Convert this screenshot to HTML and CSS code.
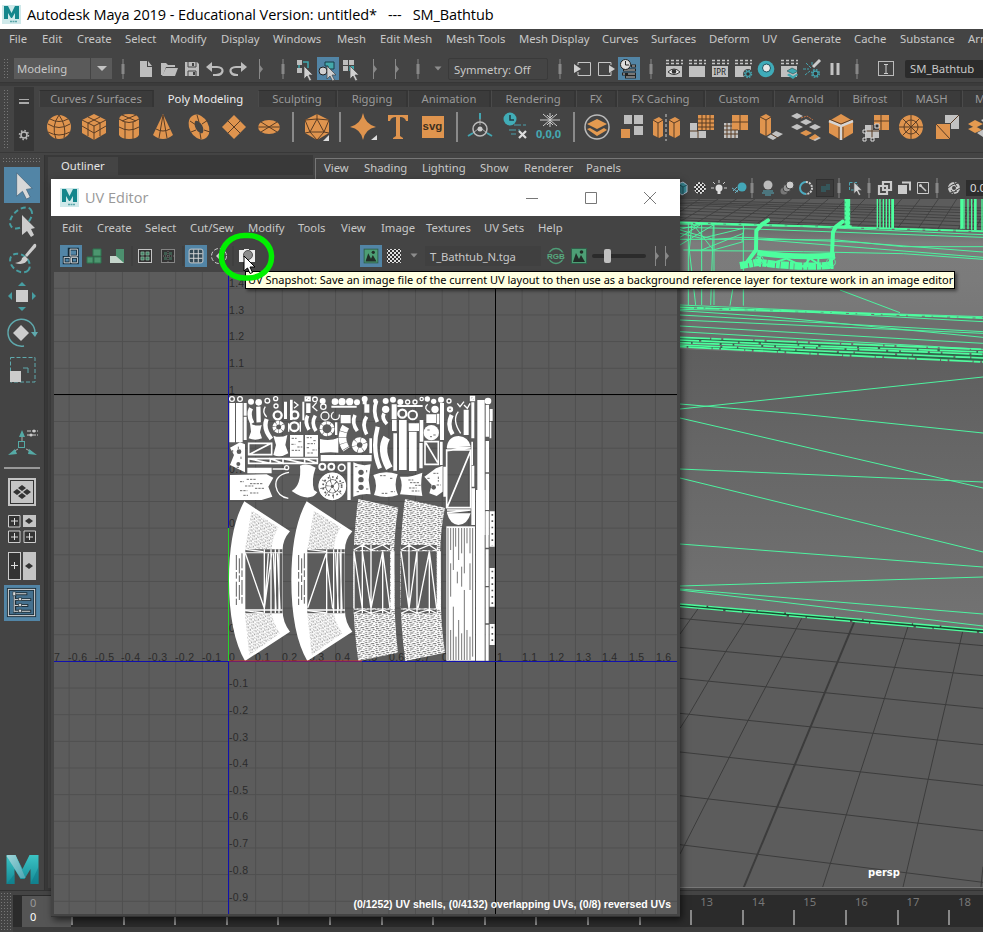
FILE: index.html
```html
<!DOCTYPE html>
<html lang="en">
<head>
<meta charset="utf-8">
<title>Autodesk Maya 2019</title>
<link rel="stylesheet" href="styles.css">
</head>
<body>
<svg class="defs" width="0" height="0">
<defs>
<linearGradient id="teal" x1="0" y1="0" x2="0" y2="1"><stop offset="0" stop-color="#3cc4c4"/><stop offset="1" stop-color="#138a96"/></linearGradient>
<linearGradient id="pale" x1="0" y1="0" x2="1" y2="1"><stop offset="0" stop-color="#9fd6da"/><stop offset="1" stop-color="#4fa7b3"/></linearGradient>
<symbol id="mlogo" viewBox="0 0 32 30"><path d="M0 0H9L16 14L23 0H32V29H24V14L18 24H14L8 14V29H0Z" fill="url(#teal)"/><path d="M0 1L1 0H9L19 23H14Z" fill="url(#pale)"/><path d="M0 29L8 19V29ZM24 29L32 12V29Z" fill="#0d7886" opacity=".5"/></symbol>
<symbol id="appicon" viewBox="0 0 19 19"><rect width="19" height="19" fill="#cfe9ea"/><path d="M2 1H6L9.500 8L13 1H17V14H13V8L10 13H9L6 8V14H2Z" fill="#14868c"/><path d="M8 16.500H15" stroke="#5aa5a9" stroke-width="1.500" stroke-dasharray="2 .5"/></symbol>
<symbol id="sep" viewBox="0 0 24 24"><path d="M12 2V22" stroke="#888"/><path d="M12 7V17" stroke="#888" stroke-width="3"/></symbol>
<symbol id="asep" viewBox="0 0 24 24"><path d="M11.500 2V22" stroke="#888"/><path d="M11 7L15 12L11 17Z" fill="#888"/></symbol>
<symbol id="drop" viewBox="0 0 24 24"><path d="M8.500 9.500H15.500L12 13.500Z" fill="#8d8d8d"/></symbol>
<symbol id="ptr" viewBox="0 0 24 24"><path d="M11 9V22L14 19L16.500 24L18.500 23L16 18H20Z" fill="#d0d0d0" stroke="#444" stroke-width=".7"/></symbol>
<symbol id="new" viewBox="0 0 24 24"><path d="M6 4H13V10H18V20H6Z" fill="#bdbdbd"/><path d="M14 4L18 9H14Z" fill="#bdbdbd"/></symbol>
<symbol id="open" viewBox="0 0 24 24"><path d="M4 18V6H9L11 8H18V10H9L6 18Z" fill="#bdbdbd"/><path d="M9 11H21L18 19H5Z" fill="#bdbdbd"/></symbol>
<symbol id="save" viewBox="0 0 24 24"><path d="M5 5H17L19 7V19H5Z" fill="#bdbdbd"/><path d="M8 5V10H16V5M8 19V14H16V19" fill="#bdbdbd" stroke="#444"/><path d="M13 6V9M14 15V18" stroke="#444" stroke-width="2"/></symbol>
<symbol id="undo" viewBox="0 0 24 24"><path d="M7 10H14C22 10 21 18 13 18H10" fill="none" stroke="#bdbdbd" stroke-width="2.200"/><path d="M9 5V15L3 10Z" fill="#bdbdbd"/></symbol>
<symbol id="redo" viewBox="0 0 24 24"><path d="M17 10H10C2 10 3 18 11 18H12" fill="none" stroke="#bdbdbd" stroke-width="2.200"/><path d="M15 5V15L21 10Z" fill="#bdbdbd"/></symbol>
<symbol id="hier" viewBox="0 0 24 24"><path d="M4 3H9V8H4ZM4 11H9V16H4ZM11 12H14V17H11Z" fill="#bdbdbd"/><path d="M10 5H15V11M6 8V11" fill="none" stroke="#3fa7ad" stroke-width="1.500"/><use href="#ptr"/></symbol>
<symbol id="obj" viewBox="0 0 24 24"><rect x="1" width="22" height="23" fill="#5285a6"/><circle cx="7" cy="14" r="4" fill="#d0d0d0" stroke="#222"/><path d="M9 5H18V12H12V9H9Z" fill="#44a9ab" stroke="#183d46"/><use href="#ptr"/></symbol>
<symbol id="comp" viewBox="0 0 24 24"><path d="M4 3H9V8H4ZM10 3H15V8H10ZM4 9H9V14H4Z" fill="#bdbdbd"/><path d="M10 9H15V14H10Z" fill="#3fa7ad"/><use href="#ptr"/></symbol>
<symbol id="inp" viewBox="0 0 24 24"><path d="M7 8V5.500H19.500V18.500H7V15" fill="none" stroke="#c5c5c5"/><path d="M3 7L10 12L3 16Z" fill="#d0d0d0"/></symbol>
<symbol id="outp" viewBox="0 0 24 24"><path d="M17 8V5.500H4.500V18.500H17V15" fill="none" stroke="#c5c5c5"/><path d="M15 8L21 12L15 16Z" fill="#d0d0d0"/></symbol>
<symbol id="hist" viewBox="0 0 24 24"><rect x="1" y="0" width="22" height="23" fill="#5285a6"/><path d="M6 13H19M5 17H19M8 20H19M14 9H19" stroke="#222" stroke-width="3"/><path d="M7 13H18M6 17H8M11 17H18M9 20H18M15 9H18" stroke="#ccc"/><circle cx="8.500" cy="7.500" r="5" fill="#ddd" stroke="#222"/><path d="M8.500 4V8H12" fill="none" stroke="#222"/></symbol>
<symbol id="clap" viewBox="0 0 24 24"><path d="M4 3.500H21M4 6.500H21" stroke="#c5c5c5" stroke-width="1.500" stroke-dasharray="3 2"/><path d="M4 9H20V20H4Z" fill="#c0c0c0"/></symbol>
<symbol id="ceye" viewBox="0 0 24 24"><use href="#clap"/><path d="M6 15Q12 9 18 15Q12 20 6 15Z" fill="#eee" stroke="#333"/><circle cx="12" cy="14.500" r="2.300" fill="#333"/></symbol>
<symbol id="cipr" viewBox="0 0 24 24"><use href="#clap"/><text x="5.500" y="18" class="tiny">IPR</text></symbol>
<symbol id="gear" viewBox="0 0 24 24"><circle cx="12" cy="12" r="6" fill="none" stroke="#45a3ae" stroke-width="2.500" stroke-dasharray="2.700 2"/><circle cx="12" cy="12" r="4" fill="#333" stroke="#45a3ae" stroke-width="2"/></symbol>
<symbol id="cgear" viewBox="0 0 24 24"><use href="#clap"/><circle cx="17" cy="17" r="5" fill="#444"/><use href="#gear" x="10" y="10" width="14" height="14"/></symbol>
<symbol id="ball" viewBox="0 0 24 24"><circle cx="12" cy="12" r="8.300" fill="#3fabb9"/><circle cx="12.500" cy="11" r="4" fill="#e6e6e6" stroke="#1c5260"/></symbol>
<symbol id="clay" viewBox="0 0 24 24"><use href="#clap"/><path d="M10 14L15 11L21 14L16 17Z" fill="#3fa7b0" stroke="#29484e" stroke-width=".6"/><path d="M10 18L12 16.500L16 19L20 16.500L21 18L16 22Z" fill="#3fa7b0"/></symbol>
<symbol id="light" viewBox="0 0 24 24"><path d="M13 10L20 3" stroke="#ccc" stroke-width="3"/><path d="M6 6L11 11M3 12H9M5 18L10 14M12 5V9" stroke="#45a3ae" stroke-dasharray="3 1"/><use href="#gear" x="8" y="9" width="15" height="15"/></symbol>
<symbol id="pause" viewBox="0 0 24 24"><path d="M9 6V18M15 6V18" stroke="#c3c3c3" stroke-width="3"/></symbol>
<symbol id="ibeam" viewBox="0 0 24 24"><rect x="4.500" y="4.500" width="15" height="14" fill="none" stroke="#bbb"/><path d="M10 7.500H14M12 8V16M10 16.500H14" stroke="#ccc"/></symbol>

<symbol id="sph" viewBox="0 0 30 30"><circle cx="15" cy="15" r="12" fill="#df944e"/><path d="M4 12Q15 19 26 12M4 20Q15 26 26 20M6 7Q15 12 24 7M15 3Q7 14 12 27M15 3Q23 14 20 26" class="ed"/></symbol>
<symbol id="cub" viewBox="0 0 30 30"><path d="M3 8L15 2L27 8V21L15 28L3 21Z" fill="#df944e"/><path d="M3 8L15 14L27 8M15 14V28M9 5L21 11V24M21 5L9 11V24M3 14L15 21L27 14" class="ed"/></symbol>
<symbol id="cyl" viewBox="0 0 30 30"><path d="M5 7Q6 2 15 2Q24 2 25 7V23Q23 27 15 27Q7 27 5 23Z" fill="#df944e"/><path d="M5 7Q15 14 25 7M5 15Q15 21 25 15M11 10V27M19 10V27M8 3L22 9M22 3L8 9" class="ed"/></symbol>
<symbol id="con" viewBox="0 0 30 30"><path d="M15 2L25 23Q15 31 5 23Z" fill="#df944e"/><path d="M8 17Q15 21 22 17M15 3L11 26M15 3L19 26" class="ed"/></symbol>
<symbol id="tor" viewBox="0 0 30 30"><ellipse cx="15" cy="15" rx="6.500" ry="10" fill="none" stroke="#df944e" stroke-width="6" transform="rotate(-28 15 15)"/><path d="M6 9L12 13M13 3L15 10M24 8L18 12M26 20L20 18M17 27L16 21M7 20L12 18" class="ed"/></symbol>
<symbol id="pln" viewBox="0 0 30 30"><path d="M15 3L27 15L15 27L3 15Z" fill="#df944e"/><path d="M9 9L21 21M21 9L9 21" class="ed"/></symbol>
<symbol id="dsc" viewBox="0 0 30 30"><ellipse cx="15" cy="15" rx="11" ry="7" fill="#df944e"/><path d="M4 15H26M7 10L23 20M23 10L7 20" class="ed"/></symbol>
<symbol id="bar" viewBox="0 0 30 30"><path d="M15 -2V32" stroke="#8a8a8a" stroke-width="2"/></symbol>
<symbol id="pla" viewBox="0 0 30 30"><path d="M15 2L27 8V21L15 28L3 21V8Z" fill="#df944e"/><path d="M3 8L15 7L27 8L22 20L27 21M22 20L15 28L8 20L3 21M8 20H22L15 7V2M15 7L8 20L3 8" class="ed"/><path d="M27 23V29H21Z" fill="#ddd"/></symbol>
<symbol id="str" viewBox="0 0 30 30"><path d="M15 1Q17 12 28 15Q17 17 15 28Q13 17 2 15Q13 12 15 1Z" fill="#df944e"/><path d="M29 23V28H23Z" fill="#ddd"/></symbol>
<symbol id="tee" viewBox="0 0 30 30"><path d="M5 3H25V9H23Q22 5 17 5V24L20 26V27H10V26L13 24V5Q8 5 7 9H5Z" fill="#df944e"/></symbol>
<symbol id="svgi" viewBox="0 0 30 30"><rect x="4" y="4" width="22" height="22" fill="#df944e"/><text x="4.500" y="18" class="svgt">svg</text></symbol>
<symbol id="jnt" viewBox="0 0 30 30"><path d="M15 1V7M3 24L8 21M27 24L22 21" stroke="#43a5b0" stroke-width="2"/><path d="M15 7V13M8 21L13 17M22 21L17 17" stroke="#aaa"/><circle cx="15" cy="17" r="7" fill="none" stroke="#bbb" stroke-width="1.500"/><circle cx="15" cy="17" r="2.500" fill="#ccc"/></symbol>
<symbol id="dhi" viewBox="0 0 30 30"><circle cx="10" cy="7" r="6.500" fill="#41adb7"/><path d="M10 3V8H14" fill="none" stroke="#213b43" stroke-width="1.500"/><path d="M14 13H26M9 18H20M11 22H16" stroke="#4aa0ac" stroke-dasharray="7 2"/><path d="M19 19L26 26M26 19L19 26" stroke="#ddd" stroke-width="2.200"/></symbol>
<symbol id="frz" viewBox="0 0 30 30"><path d="M15 1V15M5 8H25M8 2L22 14M22 2L8 14M12 3L15 6L18 3M12 13L15 10L18 13" stroke="#ccc" fill="none"/><text x="1" y="26" class="zer">0,0,0</text></symbol>
<symbol id="cmb" viewBox="0 0 30 30"><circle cx="15" cy="15" r="12" fill="none" stroke="#bbb" stroke-width="1.500"/><path d="M5 12L15 7L25 12L15 17ZM5 17L8 16L15 20L22 16L25 18L15 24Z" fill="#e49a50"/></symbol>
<symbol id="sepa" viewBox="0 0 30 30"><path d="M7 3H15V12H7ZM17 3H26V12H17ZM17 14H26V23H17Z" fill="#bdbdbd"/><path d="M4 17H13V26H4Z" fill="#df944e"/></symbol>
<symbol id="mir" viewBox="0 0 30 30"><path d="M2 8L8 5L12 8V24L8 26L2 23ZM18 8L24 5L29 8V23L24 26L18 23Z" fill="#df944e"/><path d="M2 8L7 11L12 8M7 11V26M18 8L23 11L29 8M23 11V26" class="ed"/><path d="M15 2V29" stroke="#ccc" stroke-dasharray="3 2"/></symbol>
<symbol id="smo" viewBox="0 0 30 30"><path d="M3 11H10V19H19V26H3Z" fill="#c2c2c2"/><path d="M11 3H27V18H11Z" fill="#df944e"/><path d="M15 3V18M19 3V18M23 3V18M11 7H27M11 11H27M11 15H27M11 19V26M3 19H11" class="ed"/></symbol>
<symbol id="smo2" viewBox="0 0 30 30"><path d="M3 11H17V26H3Z" fill="#c2c2c2"/><path d="M11 3H27V18H11Z" fill="#df944e"/><path d="M19 3V18M11 10H27M6 11V26M10 11V26M14 18V26M3 14H11M3 18H17M3 22H17" class="ed"/></symbol>
<symbol id="ext" viewBox="0 0 30 30"><path d="M4 5L10 2L15 5V21L10 24L4 21Z" fill="#df944e"/><path d="M4 5L10 8L15 5M10 8V24" class="ed"/><path d="M11 25L20 19L27 22L17 28Z" fill="#c2c2c2"/><path d="M15 22L22 26" class="ed"/></symbol>
<symbol id="bri" viewBox="0 0 30 30"><path d="M0 4L6 1L12 4L6 7ZM0 15L6 12L12 15L6 18ZM18 15L24 12L30 15L24 18ZM9 10L15 7L21 10L15 13ZM18 26L24 23L30 26L24 29Z" fill="#c2c2c2"/><path d="M9 21L15 18L21 21L15 24ZM18 26L24 22L28 25L22 28Z" fill="#df944e"/><path d="M10 6L16 4L22 8" fill="none" stroke="#cc7340" stroke-dasharray="2 1"/></symbol>
<symbol id="bev" viewBox="0 0 30 30"><path d="M3 9L15 2L27 9V21L15 28L3 21Z" fill="#df944e"/><path d="M3 9L15 14L27 9M15 14V28" stroke="#d5d5d5" stroke-width="2.500" fill="none"/><path d="M3 7L15 12L27 7M17 15V27M13 15V27" class="ed"/></symbol>
<symbol id="mrg" viewBox="0 0 30 30"><path d="M13 3H28V18H18V13H13Z" fill="#df944e"/><path d="M4 13H12V18H18V26H4Z" fill="#c2c2c2"/><path d="M20 3V18M13 9H28M4 19H18M11 13V26" class="ed"/><path d="M14 12H18V16H14ZM2 18H5V21H2ZM2 26H5V29H2ZM10 26H13V29H10Z" fill="#333" stroke="#ddd"/></symbol>
<symbol id="whl" viewBox="0 0 30 30"><circle cx="15" cy="15" r="12" fill="#df944e"/><path d="M15 3V27M3 15H27M6.500 6.500L23.500 23.500M23.500 6.500L6.500 23.500" class="ed"/><circle cx="15" cy="15" r="7" class="ed"/></symbol>
<symbol id="tri" viewBox="0 0 30 30"><path d="M13 3H27V17H19V11H13Z" fill="#c2c2c2"/><path d="M4 12H18V27H4Z" fill="#df944e"/><path d="M4 12L18 27M27 3L18 12" class="ed"/></symbol>
<symbol id="mul" viewBox="0 0 30 30"><path d="M2 12L9 8L17 12L9 16ZM2 17L9 14L16 18L9 21Z" fill="#e49a50"/><path d="M11 21L18 17L28 22L20 27ZM15 8L22 5L28 9L20 13Z" fill="#c2c2c2"/></symbol>

<symbol id="b3" viewBox="0 0 24 24"><path d="M4.500 13.500H11V19.500H4.500ZM12.500 13.500H19V19.500H12.500ZM10 4.500H19V12H10Z" fill="none" stroke="#132a38" stroke-width="3"/><path d="M4.500 13.500H11V19.500H4.500ZM12.500 13.500H19V19.500H12.500ZM11 4.500H19V12H11Z" fill="none" stroke="#ddd"/></symbol>
<symbol id="g3" viewBox="0 0 24 24"><path d="M5 13H11V19H5ZM12 13H19V19H12ZM11 5H19V12H11Z" fill="#4c966f" stroke="#2f7451"/></symbol>
<symbol id="g4" viewBox="0 0 24 24"><path d="M5 12H19V19H5ZM11 5H19V12H11Z" fill="#4c8f6e"/><path d="M5 12H11V19H5ZM11 12L19 19H11Z" fill="#c4d4ca"/></symbol>
<symbol id="gr1" viewBox="0 0 24 24"><rect x="5.500" y="5.500" width="13" height="13" fill="#333" stroke="#c5c5c5"/><path d="M8 8H11V11H8ZM13 8H16V11H13ZM8 13H11V16H8ZM13 13H16V16H13Z" fill="#3f8264" stroke="#86b39c" stroke-width=".8"/></symbol>
<symbol id="gr2" viewBox="0 0 24 24"><rect x="5.500" y="5.500" width="13" height="13" fill="#333" stroke="#858585"/><path d="M8 8H11V11H8ZM13 8H16V11H13ZM8 13H11V16H8ZM13 13H16V16H13Z" fill="#3f5c4f"/><path d="M12 7V18M7 12H18" stroke="#777" stroke-dasharray="1 1"/></symbol>
<symbol id="gr3" viewBox="0 0 24 24"><rect x="4.500" y="4.500" width="15" height="15" rx="2" fill="#344955" stroke="#d4d4d4"/><path d="M9.500 5V19M14.500 5V19M5 9.500H19M5 14.500H19" stroke="#ddd"/></symbol>
<symbol id="gr4" viewBox="0 0 24 24"><circle cx="12" cy="12" r="7.500" fill="none" stroke="#ccc" stroke-dasharray="4 2"/><path d="M12 9L15 12L12 15L9 12Z" fill="#ccc"/></symbol>
<symbol id="cam" viewBox="0 0 24 24"><path d="M4 6H9V5H14V6H20V18H4Z" fill="#eee"/><circle cx="13" cy="11" r="4.500" fill="#8c8c8c" stroke="#555"/></symbol>
<symbol id="vsep" viewBox="0 0 24 24"><path d="M12 2V22" stroke="#3a3a3a"/></symbol>
<symbol id="img" viewBox="0 0 24 24"><rect x="4.500" y="4.500" width="15" height="15" fill="#4d9f75" stroke="#30604a"/><path d="M6 18L9 9L12 15L14 11L18 18Z" fill="#222e28"/><circle cx="14.500" cy="8" r="1.800" fill="#222e28"/></symbol>
<pattern id="ck" width="4" height="4" patternUnits="userSpaceOnUse"><rect width="4" height="4" fill="#333"/><path d="M0 0H2V2H0ZM2 2H4V4H2Z" fill="#ddd"/></pattern>
<symbol id="chk" viewBox="0 0 24 24"><rect x="5" y="5" width="14" height="14" fill="url(#ck)"/></symbol>
<symbol id="rgb" viewBox="0 0 24 24"><circle cx="12" cy="12" r="7.500" fill="none" stroke="#4f9c77" stroke-width="1.500"/><rect x="2" y="8.500" width="20" height="7" fill="#444"/><text x="3" y="15" class="rgbt">RGB</text></symbol>

<symbol id="vball" viewBox="0 0 24 24"><circle cx="14" cy="11" r="4.500" fill="#43a7b8"/><path d="M4 12L10 16M5 15L9 11M7 17L11 13" stroke="#6db0c2"/></symbol>
<symbol id="vcube" viewBox="0 0 24 24"><path d="M7 8L12 6L16 9V16L11 19L7 16Z" fill="#3b8d9a" stroke="#abc"/><path d="M7 8L12 11L16 9M12 11V18" stroke="#1f5560" fill="none"/></symbol>
<symbol id="vchk" viewBox="0 0 24 24"><circle cx="12" cy="12" r="6" fill="url(#ck)"/></symbol>
<symbol id="bulb" viewBox="0 0 24 24"><circle cx="12" cy="12" r="3.500" fill="#ddd"/><path d="M12 15V18" stroke="#ddd" stroke-width="3"/><path d="M12 4V7M4 12H7M17 12H20M6 6L8 8M18 6L16 8" stroke="#ccc"/></symbol>
<symbol id="vao" viewBox="0 0 24 24"><circle cx="12" cy="9" r="4.500" fill="#bbb"/><path d="M7 15H17M6 17H18M9 19H15" stroke="#54a6b5" stroke-width="1.200"/></symbol>
<symbol id="vmb" viewBox="0 0 24 24"><circle cx="8" cy="15" r="3.500" fill="#777"/><circle cx="11" cy="12" r="4" fill="#999" stroke="#444"/><circle cx="14" cy="9" r="4" fill="#ccc" stroke="#444"/></symbol>
<symbol id="vaa" viewBox="0 0 24 24"><path d="M12 6A6 6 0 0 0 12 18" fill="none" stroke="#4dabc0" stroke-width="2"/><path d="M12 6A6 6 0 0 1 12 18" fill="none" stroke="#ccc" stroke-width="2" stroke-dasharray="2 1"/></symbol>
<symbol id="vdim" viewBox="0 0 24 24"><rect x="3.500" y="3.500" width="17" height="17" fill="#3b3b3b" stroke="#303030"/><path d="M8 10H13V16H8ZM13 8H17V14H13Z" fill="#35565a"/></symbol>
<symbol id="vsel" viewBox="0 0 24 24"><path d="M6.500 6.500H14V14H6.500Z" fill="none" stroke="#4ba4b2" stroke-dasharray="3 1.500"/><g transform="translate(1 -2) scale(.9)"><use href="#ptr"/></g></symbol>
<symbol id="vxr" viewBox="0 0 24 24"><path d="M6 10H14V18H6ZM10 6H18V14H10Z" fill="none" stroke="#ccc" stroke-width="2.200"/></symbol>
<symbol id="vxs" viewBox="0 0 24 24"><path d="M10 6.500H18V14.500" fill="none" stroke="#ccc" stroke-width="2"/><path d="M6 9H15V18H6Z" fill="#ccc"/></symbol>
<symbol id="vxa" viewBox="0 0 24 24"><path d="M6.500 6.500H17.500V17.500H6.500Z" fill="none" stroke="#ccc"/><path d="M9 9L15 15" stroke="#ccc" stroke-width="1.500"/><circle cx="9.500" cy="9.500" r="1.500" fill="#ccc"/></symbol>
<symbol id="ape" viewBox="0 0 24 24"><circle cx="12" cy="12" r="6" fill="#ccc"/><path d="M12 6L15 11M18 12L13 15M12 18L9 14M6 12L10 9M16 7L10 9M8 17L15 15" stroke="#444"/><circle cx="12" cy="12" r="2" fill="#444"/></symbol>

<symbol id="bigarrow" viewBox="0 0 37 37"><path d="M13 6V30L19 25L23 33L27 31L23 23L29 22Z" fill="#d8d8d8" stroke="#3c6079" stroke-width=".7"/></symbol>
<symbol id="lasso" viewBox="0 0 37 37"><ellipse cx="17" cy="14" rx="13" ry="8" transform="rotate(-42 17 14)" fill="none" stroke="#479ea2" stroke-width="2" stroke-dasharray="5 3"/><path d="M18 11V31L23 27L27 33L30 31L27 25L31 24Z" fill="#ccc"/></symbol>
<symbol id="psel" viewBox="0 0 37 37"><ellipse cx="16" cy="22" rx="11" ry="8" transform="rotate(40 16 22)" fill="none" stroke="#479ea2" stroke-width="2" stroke-dasharray="5 3"/><path d="M21 14L30 3Q33 2 32 6L23 16Z" fill="#ccc"/><path d="M21 15L24 18Q21 25 11 22Q18 21 18 17Z" fill="#ccc"/></symbol>
<symbol id="move" viewBox="0 0 37 37"><rect x="12" y="12" width="12" height="12" fill="#ccc"/><path d="M14 8L18 4L22 8ZM14 29H22L18 33ZM8 14V22L4 18ZM28 14V22L32 18Z" fill="#479ea2"/></symbol>
<symbol id="rot" viewBox="0 0 37 37"><path d="M17 10L25 18L17 26L9 18Z" fill="#ccc"/><path d="M31 18A13.500 13.500 0 1 0 20 31" fill="none" stroke="#5fa9ad" stroke-width="1.500"/><path d="M27 17H34L31 22Z" fill="#5fa9ad"/></symbol>
<symbol id="scl" viewBox="0 0 37 37"><path d="M6.500 5.500H31V30H6.500Z" fill="none" stroke="#5fa9ad" stroke-dasharray="4 2"/><path d="M19 16H24V21" fill="none" stroke="#5fa9ad"/><rect x="6" y="19" width="11" height="11" fill="#ccc"/></symbol>
<symbol id="axes" viewBox="0 0 37 37"><path d="M18 10V16M14 23L9 26M22 23L28 26" stroke="#aaa"/><rect x="14.500" y="15.500" width="6" height="6" fill="none" stroke="#55aaa6"/><path d="M18 4L21 11H15ZM11 23L13 28L4 29ZM25 23L33 29L24 28Z" fill="#55aaa6"/><path d="M23 5H34M23 9H34" stroke="#ccc" stroke-dasharray="4 1"/><circle cx="30" cy="5" r="1.500" fill="#ccc"/><circle cx="27" cy="9" r="1.500" fill="#ccc"/></symbol>
<symbol id="lay1" viewBox="0 0 37 37"><rect x="4" y="4" width="28" height="28" fill="#c4c4c4"/><rect x="6.500" y="6.500" width="23" height="23" fill="none" stroke="#333"/><path d="M14 14L18 11L22 14L18 17ZM9 18L13 15L17 18L13 21ZM19 18L23 15L27 18L23 21ZM14 22L18 19L22 22L18 25Z" fill="#333"/></symbol>
<symbol id="lay2" viewBox="0 0 37 37"><path d="M4.500 4.500H16V16H4.500ZM4.500 20H16V31.500H4.500ZM20 20H31.500V31.500H20Z" fill="#333" stroke="#ccc"/><rect x="19" y="4" width="13" height="12" fill="#c4c4c4"/><path d="M21 10L25 7L29 10L25 13Z" fill="#333"/><path d="M7 10H14M10.500 7V14M7 26H14M10.500 22V29M22 26H29M25.500 22V29" stroke="#ddd"/></symbol>
<symbol id="lay3" viewBox="0 0 37 37"><rect x="4.500" y="4.500" width="12" height="27" fill="#333" stroke="#ccc"/><rect x="19" y="4" width="13" height="28" fill="#c4c4c4"/><path d="M21 18L25 15L29 18L25 21Z" fill="#333"/><path d="M7 17.500H14M10.500 14V21" stroke="#ddd"/></symbol>
<symbol id="lay4" viewBox="0 0 37 37"><rect x="4.500" y="4.500" width="27" height="27" fill="#45708e" stroke="#1d2f3a" stroke-width="3"/><rect x="4.500" y="4.500" width="27" height="27" fill="none" stroke="#ddd"/><path d="M11 9V29M11 9H24M11 15H28M11 21H25M11 27H28" stroke="#1d2f3a" stroke-width="3"/><path d="M10.500 9V28M11 9H23M11 15H27M11 21H24M11 27H27" stroke="#ddd"/><path d="M9 7H12V11H9ZM15 13H18V16H15ZM15 19H18V22H15ZM15 25H18V28H15Z" fill="#ddd" stroke="#1d2f3a" stroke-width=".7"/></symbol>

<pattern id="grid" x="14.600" y="15.800" width="26.650" height="26.650" patternUnits="userSpaceOnUse"><path d="M0 .5H27M.5 0V27" stroke="#4f4f4f" stroke-width="1"/></pattern>
<pattern id="dith" width="31" height="24" patternUnits="userSpaceOnUse"><rect width="31" height="24" fill="#fff"/><path d="M1 2H8M12 2H15M19 5H29M3 8H12M16 9H19M24 11H30M1 14H5M9 14H18M21 17H25M2 20H7M12 21H22M27 23H30" stroke="#5c5c5c" stroke-width="2.600"/></pattern>
<pattern id="dots" width="17" height="19" patternUnits="userSpaceOnUse" patternTransform="rotate(-22)"><rect width="17" height="19" fill="#fff"/><path d="M2 1V6M7 4V6M12 2V8M5 10V13M9 12V18M15 12V15M1 16V18" stroke="#5c5c5c" stroke-width="2"/></pattern>
<linearGradient id="tub" x1="0" y1="0" x2="0" y2="1"><stop offset="0" stop-color="#626262"/><stop offset=".22" stop-color="#7c7c7c"/><stop offset=".6" stop-color="#7b7b7b"/><stop offset="1" stop-color="#777"/></linearGradient>
<linearGradient id="side" x1="0" y1="0" x2="0" y2="1"><stop offset="0" stop-color="#5e5e5e"/><stop offset=".35" stop-color="#666"/><stop offset="1" stop-color="#737373"/></linearGradient>
</defs>
</svg>

<header class="titlebar"><svg class="app"><use href="#appicon"/></svg><span>Autodesk Maya 2019 - Educational Version: untitled*&nbsp;&nbsp; ---&nbsp;&nbsp; SM_Bathtub</span></header>

<nav class="menubar"><span>File</span><span>Edit</span><span>Create</span><span>Select</span><span>Modify</span><span>Display</span><span>Windows</span><span>Mesh</span><span>Edit Mesh</span><span>Mesh Tools</span><span>Mesh Display</span><span>Curves</span><span>Surfaces</span><span>Deform</span><span>UV</span><span>Generate</span><span>Cache</span><span>Substance</span><span>Arnold</span></nav>

<div class="status">
<i class="grip"></i><div class="combo"><span>Modeling</span><b></b></div>
<svg><use href="#sep"/></svg><svg><use href="#new"/></svg><svg><use href="#open"/></svg><svg><use href="#save"/></svg><svg><use href="#undo"/></svg><svg><use href="#redo"/></svg><svg><use href="#asep"/></svg><svg><use href="#sep"/></svg><svg><use href="#hier"/></svg><svg><use href="#obj"/></svg><svg><use href="#comp"/></svg><svg><use href="#asep"/></svg><svg><use href="#asep"/></svg><svg><use href="#sep"/></svg><svg><use href="#drop"/></svg>
<div class="sym">Symmetry: Off</div>
<svg><use href="#sep"/></svg><svg><use href="#inp"/></svg><svg><use href="#outp"/></svg><svg><use href="#hist"/></svg><svg><use href="#sep"/></svg><svg><use href="#ceye"/></svg><svg><use href="#clap"/></svg><svg><use href="#cipr"/></svg><svg><use href="#cgear"/></svg><svg><use href="#ball"/></svg><svg><use href="#clay"/></svg><svg><use href="#light"/></svg><svg><use href="#pause"/></svg><svg><use href="#sep"/></svg><svg><use href="#ibeam"/></svg>
<div class="name">SM_Bathtub</div>
</div>

<section class="shelf">
<i class="grip"></i>
<div class="shelfctl"><b></b><svg viewBox="0 0 12 12"><circle cx="6" cy="6" r="3" fill="none" stroke="#bbb" stroke-width="1.500"/><circle cx="6" cy="6" r="4.500" fill="none" stroke="#bbb" stroke-width="1.500" stroke-dasharray="1.500 2"/></svg></div>
<div class="shelfmain">
<div class="tabs"><span>Curves / Surfaces</span><span class="on">Poly Modeling</span><span>Sculpting</span><span>Rigging</span><span>Animation</span><span>Rendering</span><span>FX</span><span>FX Caching</span><span>Custom</span><span>Arnold</span><span>Bifrost</span><span>MASH</span><span class="cut">Motion</span></div>
<div class="icons"><svg><use href="#sph"/></svg><svg><use href="#cub"/></svg><svg><use href="#cyl"/></svg><svg><use href="#con"/></svg><svg><use href="#tor"/></svg><svg><use href="#pln"/></svg><svg><use href="#dsc"/></svg><svg><use href="#bar"/></svg><svg><use href="#pla"/></svg><svg><use href="#bar"/></svg><svg><use href="#str"/></svg><svg><use href="#tee"/></svg><svg><use href="#svgi"/></svg><svg><use href="#bar"/></svg><svg><use href="#jnt"/></svg><svg><use href="#dhi"/></svg><svg><use href="#frz"/></svg><svg><use href="#bar"/></svg><svg><use href="#cmb"/></svg><svg><use href="#sepa"/></svg><svg><use href="#mir"/></svg><svg><use href="#smo"/></svg><svg><use href="#smo2"/></svg><svg><use href="#ext"/></svg><svg><use href="#bri"/></svg><svg><use href="#bev"/></svg><svg><use href="#mrg"/></svg><svg><use href="#whl"/></svg><svg><use href="#tri"/></svg><svg><use href="#mul"/></svg></div>
</div>
</section>

<main class="work">
<aside class="toolbox">
<i class="hgrip"></i>
<svg class="sel"><use href="#bigarrow"/></svg><svg><use href="#lasso"/></svg><svg><use href="#psel"/></svg><svg><use href="#move"/></svg><svg><use href="#rot"/></svg><svg><use href="#scl"/></svg><svg></svg><svg><use href="#axes"/></svg>
<hr>
<svg><use href="#lay1"/></svg><svg><use href="#lay2"/></svg><svg><use href="#lay3"/></svg><svg class="sel"><use href="#lay4"/></svg>
<svg class="mbig"><use href="#mlogo"/></svg>
</aside>
<section class="outliner"><h2>Outliner</h2><div></div></section>
<section class="viewport">
<nav class="vmenu"><span>View</span><span>Shading</span><span>Lighting</span><span>Show</span><span>Renderer</span><span>Panels</span></nav>
<div class="vtools"><svg><use href="#vcube"/></svg><svg><use href="#vchk"/></svg><svg><use href="#bulb"/></svg><svg><use href="#vball"/></svg><svg><use href="#sep"/></svg><svg><use href="#vao"/></svg><svg><use href="#vmb"/></svg><svg><use href="#vaa"/></svg><svg><use href="#vdim"/></svg><svg><use href="#sep"/></svg><svg><use href="#vsel"/></svg><svg><use href="#sep"/></svg><svg><use href="#vxr"/></svg><svg><use href="#vxs"/></svg><svg><use href="#vxa"/></svg><svg><use href="#sep"/></svg><svg><use href="#ape"/></svg><b>0.00</b></div>
<svg class="scene" viewBox="680 199 303 688">
<rect x="680" y="199" width="303" height="688" fill="#5c5c5c"/>
<g transform="translate(670 150) scale(.33333)">
<path d="M30 150L939 174M30 160L939 190M30 174L939 208M30 192L939 230M30 210L939 248M30 156L939 182M30 182L939 218M30 165L939 200M30 203L939 240M30 185L90 147M30 215L145 147M80 218L200 147M140 218L255 147M200 222L310 147M260 222L365 147M320 226L420 147M380 226L475 147M440 230L530 147M500 232L585 147M560 234L640 147M620 236L695 147M680 238L750 147M740 242L805 147M800 242L860 147M860 246L915 147M910 246L939 195" stroke="#3e3e3e" stroke-width="2.500" fill="none"/>
<path d="M30 216L939 244V505L30 465Z" fill="url(#tub)"/>
<path d="M30 465L939 505V637L30 598Z" fill="#6e6e6e"/>
<path d="M30 598L939 637V1446L30 1360Z" fill="url(#side)"/>
<g class="wire">
<path d="M30 216L939 243M30 222L400 230L939 254M30 232L220 236L939 262M130 268L220 262L560 277L939 306M30 268H220L500 270L700 290L939 290M60 302L260 303L400 305L700 311L939 328M260 268L939 322M30 238L95 222L30 262M30 250L95 265L220 235M65 218L130 300L220 275M95 300L220 250M40 300H130M30 240L130 268M30 285L130 225M510 420L690 488"/>
<path d="M55 220V465M66 218L58 300L77 465M95 222V465M130 225L122 465M132 225V465M220 225V467M222 235L216 275M197 365L180 467"/>
<path d="M30 465L939 505M30 472L939 500M30 478L400 486L939 515M30 495L939 545M30 510L939 550M30 528L939 580M30 545L939 598M30 482L300 500L939 562"/>
</g>
<path d="M30 472L939 504" stroke="#4dff9e" stroke-width="5" stroke-dasharray="42 9 20 5"/>
<path d="M30 218L939 244" stroke="#4dff9e" stroke-width="5" stroke-dasharray="38 8"/>
<path d="M30 566L500 588L939 606M30 576L939 618M30 587L939 629" stroke="#276b48" stroke-width="6" fill="none"/>
<g stroke="#4dff9e" stroke-width="5" fill="none"><path d="M30 562L939 598" stroke-dasharray="90 4 30 6"/><path d="M30 570L500 590L939 606" stroke-dasharray="57 7 110 5"/><path d="M30 578L939 613" stroke-dasharray="33 5 81 6"/><path d="M30 585L939 624" stroke-dasharray="121 6 44 4"/><path d="M30 590L500 615L939 636" stroke-dasharray="20 5 70 3"/></g>
<path d="M294 211L276 223L259 242L258 300L232 335M518 215L498 230L489 246L486 312L480 350" fill="none" stroke="#4dff9e" stroke-width="12" stroke-linecap="round"/>
<path d="M532 147V232" stroke="#4dff9e" stroke-width="17"/><path d="M498 230H545" stroke="#4dff9e" stroke-width="8"/>
<path d="M525 155V230M540 170V225" stroke="#2a7d51" stroke-width="2" stroke-dasharray="5 8"/>
<path d="M262 308Q370 325 495 316" fill="none" stroke="#4dff9e" stroke-width="17"/>
<path d="M210 347L265 337Q400 355 490 345" fill="none" stroke="#4dff9e" stroke-width="22" stroke-dasharray="24 3 12 2"/>
<path d="M262 320L290 345L350 326L400 350L420 325L460 352L495 322M270 320V350M413 315V352M445 315V350" fill="none" stroke="#4dff9e" stroke-width="6"/>
<circle cx="268" cy="330" r="12" class="wire"/><circle cx="483" cy="337" r="13" class="wire"/>
<path d="M622 147V233M630 147V233M640 147V234M649 147V234M658 147V235M667 147V235M873 147V237M882 147V237M894 147V238M905 147V239M915 147V240M936 147V241" stroke="#4dff9e" stroke-width="4"/><path d="M668 147V234M876 147V236M916 147V240" stroke="#4dff9e" stroke-width="8"/>
</g>
<g class="wire thin"><path d="M680 409L983 377M680 404L800 414L983 433M680 418L983 488M680 469L983 482M680 478L983 552M680 544L983 567M680 586L983 577M680 589L983 614M680 590L983 626"/></g>
<g transform="translate(670 560) scale(.33333)">
<path d="M30 138L939 216V990H30Z" fill="#5c5c5c"/>
<path d="M30 175L939 257M30 262L939 347M30 355L939 445M30 460L939 554M30 576L939 676M30 707L939 812M30 854L939 967M85 145L30 222M240 160L170 270L60 458L30 505M395 175L335 290L235 480L115 715L30 882M714 200L455 990M878 215L697 990M939 920L932 990" stroke="#3c3c3c" stroke-width="3" fill="none"/><path d="M553 185L218 990" stroke="#3c3c3c" stroke-width="6"/>
<path d="M30 136L939 213" stroke="#1c4a32" stroke-width="8"/><path d="M30 132L939 209" stroke="#4dff9e" stroke-width="4" stroke-dasharray="80 5 145 4"/><path d="M30 140L939 218" stroke="#4dff9e" stroke-width="4" stroke-dasharray="130 7 50 4"/>
</g>
<text x="868" y="876" class="persp">persp</text>
</svg>
</section>
</main>

<footer class="timeline"><i class="grip"></i><div class="frame"><span>0</span><strong>0</strong></div>
<div class="track"><span></span><span></span><span></span><span></span><span></span><span></span><span></span><span></span><span></span><span></span><span></span><span></span><span>13</span><span>14</span><span>15</span><span>16</span><span>17</span><span>18</span></div></footer>

<section class="uvwin">
<header><svg class="app"><use href="#appicon"/></svg><span>UV Editor</span><svg class="wctl" viewBox="0 0 130 16"><path d="M1 8.500H13M60.500 2.500H71.500V13.500H60.500ZM119 2L131 14M131 2L119 14" fill="none" stroke="#777"/></svg></header>
<nav class="uvmenu"><span>Edit</span><span>Create</span><span>Select</span><span>Cut/Sew</span><span>Modify</span><span>Tools</span><span>View</span><span>Image</span><span>Textures</span><span>UV Sets</span><span>Help</span></nav>
<div class="uvtools"><svg class="hot"><use href="#b3"/></svg><svg><use href="#g3"/></svg><svg><use href="#g4"/></svg><svg><use href="#vsep"/></svg><svg><use href="#gr1"/></svg><svg><use href="#gr2"/></svg><svg><use href="#vsep"/></svg><svg class="hot"><use href="#gr3"/></svg><svg><use href="#gr4"/></svg><svg><use href="#vsep"/></svg><svg><use href="#cam"/></svg><svg class="hot"><use href="#img"/></svg><svg><use href="#chk"/></svg><svg><use href="#drop"/></svg><div class="tex">T_Bathtub_N.tga</div><svg><use href="#rgb"/></svg><svg><use href="#img"/></svg><div class="slider"><b></b></div><svg><use href="#asep"/></svg><svg><use href="#asep"/></svg></div>
<svg class="uvcanvas" viewBox="54 272 623 642">
<g transform="translate(54 272)"><rect width="623" height="642" fill="#5c5c5c"/><rect width="623" height="642" fill="url(#grid)"/></g>
<g class="axis"><text x="54" y="661">7</text><text x="68" y="661">-0.6</text><text x="95" y="661">-0.5</text><text x="121" y="661">-0.4</text><text x="148" y="661">-0.3</text><text x="175" y="661">-0.2</text><text x="202" y="661">-0.1</text><text x="229" y="661">0</text><text x="255" y="661">0.1</text><text x="282" y="661">0.2</text><text x="309" y="661">0.3</text><text x="335" y="661">0.4</text><text x="362" y="661">0.5</text><text x="389" y="661">0.6</text><text x="415" y="661">0.7</text><text x="442" y="661">0.8</text><text x="497" y="661">1</text><text x="522" y="661">1.1</text><text x="549" y="661">1.2</text><text x="576" y="661">1.3</text><text x="602" y="661">1.4</text><text x="629" y="661">1.5</text><text x="656" y="661">1.6</text>
<text x="229" y="287">1.4</text><text x="229" y="314">1.3</text><text x="229" y="340">1.2</text><text x="229" y="367">1.1</text><text x="229" y="394">1</text><text x="229" y="473">0.7</text><text x="229" y="527">0.5</text><text x="229" y="632">0.1</text><text x="229" y="687">-0.1</text><text x="229" y="714">-0.2</text><text x="229" y="741">-0.3</text><text x="229" y="767">-0.4</text><text x="229" y="794">-0.5</text><text x="229" y="820">-0.6</text><text x="229" y="847">-0.7</text><text x="229" y="874">-0.8</text><text x="229" y="901">-0.9</text></g>
<path d="M54 394.500H677M495.500 272V914" stroke="#000"/>
<path d="M54 661.500H677M228.500 272V914" stroke="#1010b0"/>

<g transform="translate(220 385) scale(.33333)">
<g fill="none" stroke="#fff" stroke-width="4">
<circle cx="36" cy="42" r="7"/><circle cx="60" cy="42" r="7"/><circle cx="142" cy="47" r="7"/><circle cx="167" cy="41" r="6"/><circle cx="168" cy="63" r="6"/><circle cx="285" cy="43" r="7"/><circle cx="310" cy="65" r="8"/><circle cx="173" cy="91" r="12" stroke-width="7"/><circle cx="224" cy="90" r="11" stroke-width="7"/><circle cx="223" cy="125" r="13" stroke-width="7"/><circle cx="176" cy="126" r="13" stroke-width="11" stroke-dasharray="9 1.500"/><circle cx="315" cy="93" r="12"/><circle cx="321" cy="131" r="18" stroke-width="9" stroke-dasharray="12 1.500"/><circle cx="346" cy="92" r="12" stroke-dasharray="50 20"/><circle cx="419" cy="180" r="16" stroke-width="15" stroke-dasharray="14 1.500"/><circle cx="547" cy="86" r="12" stroke-width="7"/><circle cx="578" cy="90" r="13" stroke-width="6"/><circle cx="687" cy="48" r="6"/><circle cx="690" cy="73" r="6" stroke-width="7"/><circle cx="563" cy="51" r="6"/><circle cx="585" cy="51" r="6"/><circle cx="605" cy="42" r="5"/><circle cx="307" cy="245" r="9" stroke-width="6"/><circle cx="334" cy="245" r="9" stroke-width="6"/><circle cx="365" cy="248" r="10" stroke-width="5"/><circle cx="200" cy="248" r="6"/>
<path d="M136 65Q125 80 140 96M222 50L234 60L222 70M290 52L278 66L292 78M712 55L720 65L732 50M732 60L742 70L750 55M715 80Q695 105 722 145M623 58Q608 70 630 82M207 262Q163 270 168 305Q173 335 205 340"/>
<path d="M263 92Q253 112 267 134M286 92Q272 115 288 138M470 47Q457 78 472 111M492 85Q484 100 501 117M405 90Q394 113 412 138M440 95Q424 118 440 148" stroke-width="11"/>
<path d="M86 175H155V209H86ZM86 209L155 174M86 221H292V235H86ZM86 221L151 235V221L189 235V221L254 235V221L292 235M615 170H655V238H615ZM618 174L653 233M680 195V368H752V195ZM681 368L751 200M681 188H752L681 197M681 375H752L681 383M256 36H270V47H256ZM257 46L270 36M752 35H763V46H752ZM753 45L763 36" stroke-width="5"/>
<path d="M115 65L116 112M93 70Q83 90 97 115M140 102Q128 130 154 162M265 55V84M695 90Q680 120 698 148M473 125Q455 195 480 250" stroke-width="13"/>
<path d="M500 158Q478 195 508 250" stroke-width="22"/>
<path d="M377 125Q357 160 379 193" stroke-width="23" stroke-dasharray="16 1.500"/>
</g>
<g fill="#fff">
<path d="M28 54H45V172H28ZM48 54H68V172H48ZM71 54H80V92H71ZM71 95H80V165H71ZM192 50H201V102H192ZM247 50H253V106H247ZM210 44H218V105H210ZM302 210H455V229H302ZM448 160H456V205H448ZM334 62H410V68H334ZM362 90H392V115H362ZM428 40H440V58H428ZM433 58H448V83H433ZM515 58H530V102H515ZM516 104H530V138H516ZM532 60H608V66H532ZM537 105H560V255H537ZM566 115H597V138H566ZM567 140H590V258H567ZM599 105H610V170H599ZM598 174H608V250H598ZM520 145H531V257H520ZM619 88H648V114H619ZM650 86H658V118H650ZM660 54H672V165H660ZM660 170H668V240H660ZM670 245H678V335H670ZM382 232H392V345H382ZM82 248H155V265H82ZM158 250H195V254H158ZM731 74H746V150H731ZM754 52H763V160H754ZM772 45H794V450H772ZM797 60H807V155H797ZM797 168H807V262H797ZM797 266H807V375H797ZM797 379H806V450H797ZM809 72H818V108H809ZM809 110H814V160H809ZM754 170H759V240H754ZM755 242H763V305H755ZM754 310H765V420H754ZM345 112H352V150H345ZM204 115H208V140H204ZM239 110H243V140H239Z"/>
<circle cx="93" cy="50" r="9"/><circle cx="116" cy="52" r="10"/><circle cx="308" cy="48" r="9"/><circle cx="345" cy="50" r="10"/><circle cx="366" cy="50" r="11"/><circle cx="389" cy="50" r="11"/><circle cx="411" cy="52" r="9"/><circle cx="434" cy="42" r="9"/><circle cx="466" cy="48" r="7"/><circle cx="497" cy="48" r="9"/><circle cx="519" cy="44" r="9"/><circle cx="497" cy="73" r="11"/><circle cx="541" cy="51" r="9"/><circle cx="622" cy="42" r="8"/><circle cx="641" cy="49" r="8"/><circle cx="663" cy="44" r="9"/><circle cx="645" cy="73" r="11"/><circle cx="804" cy="48" r="10"/><circle cx="634" cy="143" r="23"/>
<path d="M90 115Q107 125 125 120L120 142L126 160Q106 168 86 160L93 140ZM160 152Q181 160 202 150L196 180L205 205Q181 220 160 210L168 180Z"/>
<path d="M680 188Q685 153 716 153Q746 156 752 184ZM681 385H752Q742 420 715 420Q690 418 681 385Z"/>
<path d="M210 150H250V215H210ZM255 150H294V215H255ZM300 162Q330 170 355 158V203Q330 200 300 204ZM30 188L60 172L75 178V262L30 240L42 210ZM30 270L140 268L160 278L145 305L157 335L125 345H30ZM400 232Q425 245 452 238L446 285L452 328Q425 325 400 335ZM460 270Q495 255 533 268Q520 300 534 330Q500 342 462 330Q475 300 460 270ZM540 275Q570 278 607 263Q600 300 607 333L540 328Q550 300 540 275ZM613 275L648 250L668 242V320L650 333L628 325L635 300Z"/>
<path d="M240 242Q262 232 287 248Q273 285 282 315L292 322Q268 355 215 318Q245 300 240 242Z"/>
</g>
<path d="M215 160H230M235 170H246M214 178H226M232 186H247M215 196H240M260 158H275M280 167H290M262 176H285M260 188H270M277 195H290M262 204H280M80 283H110M60 290H72M90 296H130M75 303H100M105 310H135M60 317H82M90 324H115M70 331H84M480 272H500M510 280H520M485 325H505M512 320H524M565 285H580M570 293H600M585 301H603M567 309H590M575 318H598M640 265H655M655 275V290M650 300H662M622 280H630M55 185V195M63 215V225M50 247H60M405 245H415M440 255V265M410 320H420M438 312H446M622 135H630M640 150H650M630 155H636M38 195V204" stroke="#5c5c5c" stroke-width="2.600" stroke-dasharray="7 3"/>
<circle cx="337" cy="304" r="31" fill="none" stroke="#fff" stroke-width="20" stroke-dasharray="21 2"/><circle cx="337" cy="304" r="39" fill="none" stroke="#fff" stroke-width="5"/><circle cx="337" cy="304" r="12" fill="none" stroke="#fff" stroke-width="14" stroke-dasharray="11 2"/><circle cx="337" cy="304" r="28" fill="none" stroke="#5c5c5c" stroke-width="5" stroke-dasharray="5 8"/>
<g fill="#5c5c5c"><circle cx="57" cy="200" r="7"/><circle cx="55" cy="237" r="6"/><circle cx="423" cy="262" r="8"/><circle cx="423" cy="284" r="8"/><circle cx="423" cy="307" r="8"/><circle cx="641" cy="307" r="7"/></g>
</g>
<g transform="translate(220 490) scale(.33333)">
<path d="M73 34L210 124Q187 150 188 182V360Q187 395 210 425L75 513Q27 430 27 270Q27 115 73 34Z" fill="#fff"/><path d="M95 62L175 112Q155 148 155 178H75ZM75 372H155Q160 400 180 430L88 495Z" fill="url(#dots)"/><path d="M76 190H187V358H76ZM76 178H187V187H76ZM76 362H187V370H76Z" fill="#5c5c5c"/><path d="M76 190L133 355L155 190M133 178V370M153 178V370M166 178V370M177 178V370M133 355L145 190M160 190L168 358M172 190L180 358M76 178L130 185M76 362L130 369" stroke="#fff" stroke-width="4" fill="none"/><path d="M49 195V345M58 205V330M66 190V350" stroke="#5c5c5c" stroke-width="3" stroke-dasharray="45 6 20 9"/>
<path d="M260 34L397 124Q374 150 375 182V360Q374 395 397 425L262 513Q214 430 214 270Q214 115 260 34Z" fill="#fff"/><path d="M282 62L362 112Q342 148 342 178H262ZM262 372H342Q347 400 367 430L275 495Z" fill="url(#dots)"/><path d="M262 190H374V358H262ZM262 178H374V187H262ZM262 362H374V370H262Z" fill="#5c5c5c"/><path d="M263 353L318 192L338 355M320 178V370M341 178V370M353 178V370M363 178V370M347 190L355 358M360 190L366 358M263 178L320 185M263 362L320 369" stroke="#fff" stroke-width="4" fill="none"/><path d="M236 195V345M245 205V330M253 190V350" stroke="#5c5c5c" stroke-width="3" stroke-dasharray="45 6 20 9"/>
<path d="M415 27L535 53Q518 150 523 270Q522 390 534 488L415 513Q398 400 400 270Q399 130 415 27Z" fill="url(#dith)"/>
<path d="M555 27L675 53Q655 150 662 270Q660 390 675 488L556 513Q540 400 541 270Q540 130 555 27Z" fill="url(#dith)"/>
<path d="M401 165H510V180H401ZM401 184H510V355H401ZM401 359H510V370H401ZM543 165H650V180H543ZM543 184H650V355H543ZM543 359H650V370H543Z" fill="#5c5c5c"/>
<path d="M402 184L427 355V165M402 355V184M427 184L453 355V165M453 355L488 184V370M488 184L510 355M427 355V370M453 355V370M401 180L427 165L453 180L488 165L510 180M401 370L427 359L453 370L488 359L510 370M543 184L567 355V165M567 355L591 184V370M594 355L628 184V370M628 184L650 355M543 180L567 165L591 180L628 165L650 180M543 370L567 359L591 370L628 359L650 370" fill="none" stroke="#fff" stroke-width="4"/>
<path d="M518 184V357M657 184V357" stroke="#fff" stroke-width="11"/>
<rect x="679" y="109" width="86" height="403" fill="#fff"/><path d="M684 114V510M692 114V180M700 114V240M707 114V170M716 114V210M725 114V190M733 114V250M741 114V160M750 114V190M758 114V500M692 420V510M700 350V510M708 440V510M716 390V510M725 430V510M733 300V510M741 420V510M750 440V510M712 245V280M725 230V290M692 220V320M750 220V300" stroke="#5c5c5c" stroke-width="2.500"/>
<path d="M768 0H794V512H768ZM797 0H806V60H797ZM797 64H806V173H797ZM797 178H806V288H797ZM797 292H806V400H797ZM797 404H806V512H797ZM809 64H824V170H809ZM809 234H824V350H809ZM809 402H824V465H809Z" fill="#fff"/>
<path d="M817 72V168M817 242V350M817 410V462" stroke="#555" stroke-width="5" stroke-dasharray="5 14"/>
</g>
<path d="M228.500 528V661" stroke="#28d428"/><path d="M229 661H362" stroke="#d33024"/>
<text x="353.500" y="908" class="stat">(0/1252) UV shells, (0/4132) overlapping UVs, (0/8) reversed UVs</text>
</svg>
</section>

<div class="tooltip">UV Snapshot: Save an image file of the current UV layout to then use as a background reference layer for texture work in an image editor</div>
<svg class="mark" viewBox="0 0 62 54"><rect x="5.500" y="5.500" width="50" height="42.500" rx="23" ry="21" fill="none" stroke="#00f000" stroke-width="5.500"/></svg>
<svg class="cursor" viewBox="0 0 14 20"><path d="M1 1V16L4.500 13L7 18.500L9.500 17.500L7 12H12Z" fill="#fff" stroke="#000"/></svg>
</body>
</html>
```
FILE: styles.css
```css
* { box-sizing: border-box; }
body { margin: 0; width: 983px; height: 932px; overflow: hidden; position: relative; display: flex; flex-direction: column; background: #444; color: #c8c8c8; font: 11.3px/16px "Noto Sans", "Open Sans", sans-serif; white-space: nowrap; }
svg { display: block; overflow: visible; flex: none; }
.defs { position: absolute; }
.tiny { font: 8px "Noto Sans", sans-serif; fill: #222; }
.svgt { font: bold 11.5px "Liberation Sans", sans-serif; fill: #40301f; }
.zer { font: bold 11px "Noto Sans", sans-serif; fill: #45a8b2; }
.rgbt { font: bold 8px "Liberation Sans", sans-serif; fill: #57aa80; }
.ed { fill: none; stroke: #593c25; stroke-width: 1; }

.titlebar { height: 29px; background: #fff; color: #000; display: flex; align-items: center; padding: 0 0 0 2px; font: 14.5px "Open Sans", sans-serif; letter-spacing: -.09px; flex: none; }
.app { width: 19px; height: 19px; margin-right: 6px; }
.menubar { height: 22px; flex: none; display: grid; padding: 0 0 2px 9px; align-items: center; grid-template-columns: 33px 35px 48px 45px 51px 52px 64px 43px 66px 73px 83px 49px 58px 53px 30px 62px 46px 68px 40px; }

.grip { width: 5px; margin: 3px 0 3px 3px; background: radial-gradient(circle, #777 .7px, transparent .9px) 0 0 / 3px 3px; align-self: stretch; }
.status { height: 32px; flex: none; display: grid; align-items: center; padding-top: 4px; border-bottom: 1px solid #363636; grid-template-columns: 14px 97px 23px 23px 23px 23px 23px 22px 23px 22px 23px 23px 23px 22px 22px 20px 22px 100px 23px 23px 23px 22px 23px 23px 23px 23px 23px 23px 23px 23px 22px 29px 31px 78px; }
.status svg { width: 24px; height: 24px; }
.combo { width: 98px; height: 21px; background: #5a5a5a; display: flex; align-items: center; padding-left: 3px; }
.combo span { width: 74px; border-right: 1px solid #444; line-height: 21px; }
.combo b { margin-left: 6px; border: 5px solid transparent; border-top-color: #c3c3c3; border-bottom: 0; }
.sym { height: 22px; border: 1px solid #3a3a3a; border-radius: 2px; line-height: 21px; padding-left: 5px; }
.name { height: 18px; background: #2b2b2b; line-height: 17px; padding-left: 5px; border-radius: 2px 0 0 2px; }

.shelf { height: 70px; flex: none; display: flex; border-top: 3px solid #3b3b3b; border-bottom: 1px solid #383838; margin-bottom: 2px; }
.shelf .grip { margin-right: 6px; }
.shelfctl { width: 20px; background: #373737; margin: 1px 5px 1px 0; display: flex; flex-direction: column; align-items: center; }
.shelfctl b { width: 10px; height: 5px; margin-top: 12px; border: solid #aaa; border-width: 1px 0 2px; }
.shelfctl svg { width: 12px; height: 12px; margin-top: 25px; }
.shelfmain { flex: 1; min-width: 0; overflow: hidden; }
.tabs { display: grid; height: 20px; padding-top: 4px; grid-template-columns: 115px 104px 79px 71px 83px 85px 41px 88px 69px 65px 63px 60px 40px; }
.tabs span { background: #3b3b3b; border: 1px solid #303030; border-bottom: 0; border-left-color: #4a4a4a; border-right: 2px solid #353535; text-align: center; color: #999; line-height: 16px; }
.tabs .on { background: #444; border-color: #444; color: #eee; }
.tabs .cut { text-align: left; padding-left: 12px; }
.icons { display: grid; padding: 6px 0 0 5px; grid-template-columns: 35px 35px 34px 36px 35px 35px 24px 24px 23px 23px 35px 35px 24px 23px 35px 35px 24px 23px 35px 34px 36px 34px 35px 35px 35px 35px 35px 36px 34px 30px; }
.icons svg { width: 30px; height: 30px; }

.work { height: 735px; flex: none; display: flex; }
.toolbox { width: 45px; padding-left: 4px; border-right: 1px solid #333; }
.toolbox svg { width: 37px; height: 37px; }
.toolbox .sel { background: #5285a6; width: 36px; height: 36px; margin-bottom: 1px; }
.hgrip { display: block; width: 40px; height: 6px; margin: 2px 0 4px -2px; background: radial-gradient(circle, #777 .7px, transparent .9px) 0 0 / 3px 3px; }
.toolbox hr { border: 0; height: 2px; background: #999; width: 36px; margin: 4px 0 5px; }
.toolbox .mbig { width: 33px; height: 30px; margin: 234px 0 0 2px; }
.outliner { width: 268px; padding: 2px 0 0 3px; background: #393939; }
.outliner h2 { margin: 0; width: 70px; height: 18px; background: #444; font: 11.300px/17px "Noto Sans", sans-serif; color: #e4e4e4; padding-left: 13px; }
.outliner div { height: 713px; background: #444; }
.viewport { flex: 1; min-width: 0; margin: 3px 0 0 2px; border: solid #777; border-width: 1px 0 1px 1px; height: 730px; overflow: hidden; }
.vmenu { display: grid; padding: 1px 0 0 8px; height: 17px; grid-template-columns: 40px 58px 58px 44px 62px 60px; }
.vtools { display: grid; height: 23px; padding: 0 0 2px 355px; align-items: center; grid-template-columns: 17px 19px 21px 12px 16px 20px 18px 19px 14px 16px 14px 16px 19px 19px 14px 17px 24px 20px; }
.vtools svg { width: 24px; height: 24px; }
.vtools b { font-weight: 400; background: #2d2d2d; line-height: 16px; padding-left: 4px; color: #ddd; }
.scene { width: 303px; height: 688px; margin-left: 364px; }
.wire { fill: none; stroke: #4df3a0; stroke-width: 3; }
.thin { stroke-width: 1; }
.persp { font: bold 10px "DejaVu Sans", sans-serif; fill: #fff; }

.timeline { flex: 1; display: flex; border-top: 1px solid #333; background: linear-gradient(#444 0 4px, #2b2b2b 4px 36px, #3c3c3c 36px); }
.timeline .grip { margin: 1px 0 0; padding-left: 3px; width: 13px; flex: none; background-color: #444; }
.frame { flex: none; width: 58px; margin-top: 5px; height: 31px; border-left: 9px solid #2b2b2b; background: #555; padding-left: 8px; display: flex; flex-direction: column; font-size: 11px; line-height: 14px; }
.frame span { color: #999; }
.frame strong { color: #fff; font-weight: 400; }
.track { flex: none; display: grid; grid-template-columns: repeat(18, 51.600px); padding-top: 3px; }
.track span { height: 32px; padding-left: 10px; color: #777; background: linear-gradient(#888, #888) 0 16px / 2px 15px no-repeat; }

.uvwin { position: absolute; left: 51px; top: 179px; width: 629px; height: 738px; background: #444; box-shadow: 2px 3px 7px #0009; border-bottom: 1px solid #333; }
.uvwin header { height: 37px; background: #fff; color: #999; display: flex; align-items: center; padding-left: 9px; font: 14.5px "Open Sans", sans-serif; }
.wctl { width: 130px; height: 16px; margin-left: 326px; position: absolute; left: 148px; }
.uvmenu { display: grid; height: 24px; align-items: center; padding-left: 11px; grid-template-columns: 35px 48px 45px 58px 50px 43px 40px 45px 58px 54px 40px; }
.uvtools { display: grid; height: 32px; align-items: center; padding-left: 8px; grid-template-columns: 23px 23px 15px 13px 23px 15px 13px 23px 14px 14px 124px 23px 20px 23px 119px 23px 25px 52px 10px 24px; }
.uvtools svg { width: 24px; height: 24px; }
.uvtools .hot { width: 22px; height: 22px; background: #5285a6; margin-left: 1px; }
.tex { width: 116px; height: 20px; background: #404040; padding-left: 5px; line-height: 21px; letter-spacing: -.15px; }
.slider { width: 54px; height: 4px; background: #2b2b2b; border-radius: 2px; }
.slider b { display: block; width: 7px; height: 14px; background: #c0c0c0; border-radius: 2px; margin: -5px 0 0 12px; }
.uvcanvas { width: 623px; height: 642px; margin-left: 3px; overflow: hidden; }
.axis { font: 10.5px "Liberation Sans", sans-serif; letter-spacing: .3px; fill: #2b2b2b; }
.stat { font: bold 10.5px "Liberation Sans", sans-serif; fill: #fff; }
.tooltip { position: absolute; left: 245px; top: 271px; width: 710px; height: 18px; border: 1px solid #000; background: #ffffe1; color: #000; font-size: 11px; line-height: 16px; padding-left: 2px; box-shadow: 2px 2px 3px #0007; }
.mark { position: absolute; left: 216px; top: 230px; width: 62px; height: 54px; }
.cursor { position: absolute; left: 243px; top: 255px; width: 14px; height: 20px; }
```
